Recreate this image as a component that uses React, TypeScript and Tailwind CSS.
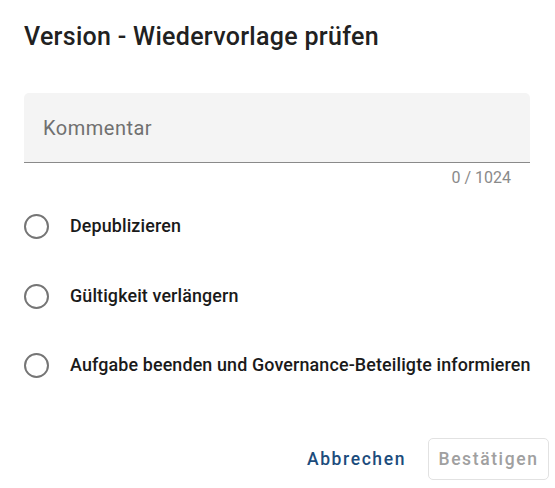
import React from "react";

function Radio({ label }: { label: string }) {
  return (
    <label className="flex items-center h-[69.5px]">
      <span className="w-[25px] h-[25px] rounded-full border-[2.5px] border-[#757575] shrink-0" />
      <span className="ml-[21px] text-[17.9px] font-medium tracking-[0.13px] text-[#1a1a1a]">{label}</span>
    </label>
  );
}

export default function App() {
  return (
    <div className="w-[555px] h-[488px] bg-white flex flex-col px-[24px]" style={{ fontFamily: "Roboto, 'Noto Sans', sans-serif" }}>
      <h1 className="mt-[22px] text-[25px] font-medium tracking-[0.3px] text-[#212121] leading-[30px]">Version - Wiedervorlage prüfen</h1>
      <div className="mt-[41px] w-[506px] h-[70px] bg-[#f4f4f4] rounded-t-[5px] border-b border-[#8a8a8a] flex items-center px-[19px]">
        <span className="text-[20px] tracking-[0.5px] text-[#707070]">Kommentar</span>
      </div>
      <div className="flex justify-end pr-[20px] mt-[5px] text-[16px] text-[#8a8a8a] leading-[20px]">0 / 1024</div>
      <div className="mt-[4px] flex flex-col">
        <Radio label="Depublizieren" />
        <Radio label="Gültigkeit verlängern" />
        <Radio label="Aufgabe beenden und Governance-Beteiligte informieren" />
      </div>
      <div className="mt-auto mb-[8px] flex justify-end items-center -mr-[18px] gap-[12px]">
        <button className="h-[42px] px-[10px] text-[17.5px] font-medium tracking-[1.6px] text-[#1c4c7c]">Abbrechen</button>
        <button className="h-[42px] w-[121px] border border-[#e2e2e2] rounded-[5px] text-[17.5px] font-medium tracking-[1.6px] text-[#a0a0a0]">Bestätigen</button>
      </div>
    </div>
  );
}
